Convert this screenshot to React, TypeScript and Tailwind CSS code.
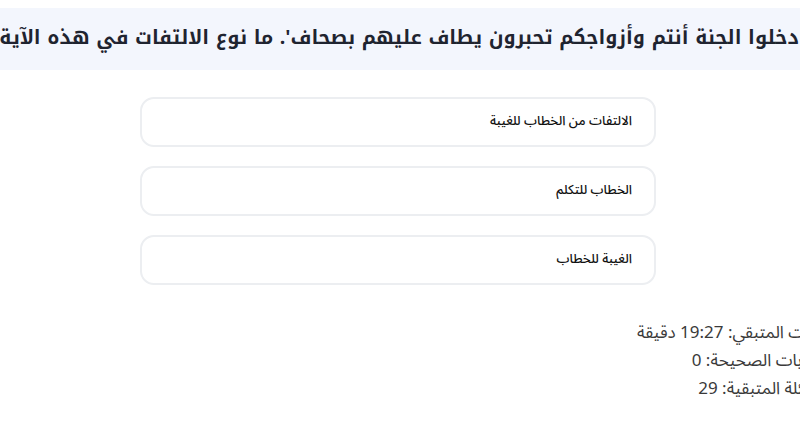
export default function App() {
  const options = ["الالتفات من الخطاب للغيبة", "الخطاب للتكلم", "الغيبة للخطاب"];
  return (
    <div dir="rtl" className="w-[800px] h-[445px] overflow-hidden bg-white">
      <div className="pt-[8px]">
        <div className="h-[62px] bg-[#f3f6fd] flex items-center justify-center">
          <h1
            className="whitespace-nowrap text-[19.5px] font-bold text-[#1f2430] leading-none pb-[2px]"
            style={{ fontFamily: '"Noto Kufi Arabic", "Noto Sans Arabic", sans-serif' }}
          >
            'ادخلوا الجنة أنتم وأزواجكم تحبرون يطاف عليهم بصحاف'. ما نوع الالتفات في هذه الآية؟
          </h1>
        </div>
      </div>
      <div className="flex justify-center pr-[4px] mt-[27px]">
        <div className="w-[516px] flex flex-col gap-[19px]">
          {options.map((o) => (
            <div
              key={o}
              className="h-[50px] rounded-[14px] border-2 border-[#eceef1] bg-white flex items-center px-[22px] text-[13px] font-medium text-[#111111]"
              style={{ fontFamily: '"Noto Sans Arabic", sans-serif' }}
            >
              {o}
            </div>
          ))}
        </div>
      </div>
      <div
        className="mt-[34px] mr-[-31px] flex flex-col items-start text-[17px] leading-[28px] text-[#3a3a3a]"
        style={{ fontFamily: '"Noto Sans Arabic", sans-serif' }}
      >
        <div>الوقت المتبقي: 19:27 دقيقة</div>
        <div>الإجابات الصحيحة: 0</div>
        <div>الأسئلة المتبقية: 29</div>
      </div>
    </div>
  );
}
